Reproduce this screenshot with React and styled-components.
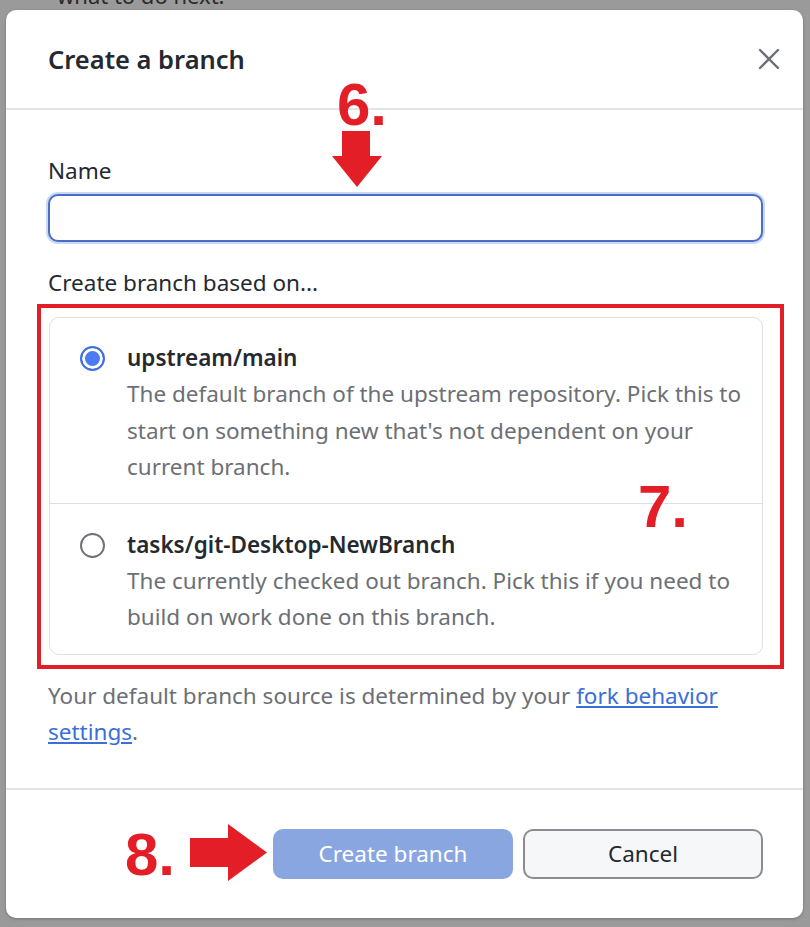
import React from 'react';
import styled, { createGlobalStyle } from 'styled-components';

const GlobalStyle = createGlobalStyle`
  html, body {
    margin: 0;
    padding: 0;
    background: #9a9a9a;
  }
  body {
    font-family: "Noto Sans", "Open Sans", "Liberation Sans", sans-serif;
  }
`;

const Screen = styled.div`
  position: relative;
  width: 810px;
  height: 927px;
  overflow: hidden;
  background: #9a9a9a;
`;

const BehindText = styled.div`
  position: absolute;
  left: 57px;
  top: -20px;
  font-size: 22px;
  color: #2a2a2a;
`;

const Dialog = styled.div`
  position: relative;
  margin: 10px 7px 0 6px;
  height: 908px;
  background: #fff;
  border-radius: 10px;
  display: flex;
  flex-direction: column;
  box-shadow: 0 1px 3px rgba(0, 0, 0, 0.25);
`;

const Header = styled.div`
  height: 98px;
  display: flex;
  align-items: center;
  justify-content: space-between;
  padding: 0 19px 0 42px;
  border-bottom: 2px solid #e3e4e6;
`;

const Title = styled.h2`
  margin: 0;
  font-size: 25.5px;
  font-weight: 600;
  color: #24292f;
`;

const CloseButton = styled.button`
  border: none;
  background: none;
  padding: 4px;
  display: flex;
  cursor: pointer;
`;

const Body = styled.div`
  padding: 46px 40px 38px 42px;
  border-bottom: 2px solid #e3e4e6;
`;

const Label = styled.div`
  font-size: 22.5px;
  line-height: 30px;
  color: #24292f;
`;

const NameInput = styled.input`
  display: block;
  box-sizing: border-box;
  width: 100%;
  height: 48px;
  margin: 8px 0 26px;
  border: 2px solid #4a6cc4;
  border-radius: 10px;
  box-shadow: 0 0 0 2px #c9d8f7;
  outline: none;
  font-size: 20px;
  padding: 0 12px;
`;

const Highlight = styled.div`
  border: 4px solid #e41e26;
  margin: 6px -21px 9px -11px;
  padding: 9px 17px 10px 8px;
`;

const Card = styled.div`
  border: 1px solid #dedfe2;
  border-radius: 10px;
`;

const Option = styled.label`
  display: flex;
  align-items: flex-start;
  gap: 22px;
  padding: ${p => p.$first ? '22px 20px 17px 30px' : '23px 20px 18px 30px'};
  border-bottom: ${p => p.$first ? '1px solid #dedfe2' : 'none'};
`;

const Radio = styled.span`
  flex: none;
  box-sizing: border-box;
  width: 25px;
  height: 25px;
  margin-top: 6px;
  border-radius: 50%;
  border: 2px solid ${p => p.$checked ? '#3f6fe0' : '#6f7277'};
  background: ${p => p.$checked ? '#4a7bf0' : '#fff'};
  box-shadow: ${p => p.$checked ? 'inset 0 0 0 3px #fff' : 'none'};
`;

const OptionText = styled.div`
  display: flex;
  flex-direction: column;
`;

const OptionTitle = styled.div`
  font-size: 22.5px;
  line-height: 36px;
  font-weight: 600;
  color: #24292f;
`;

const OptionDesc = styled.div`
  font-size: 22.5px;
  line-height: 36.5px;
  color: #6c6f75;
`;

const Note = styled.p`
  margin: 0;
  font-size: 22.5px;
  line-height: 36px;
  color: #6c6f75;
`;

const Link = styled.a`
  color: #3b6fd8;
  text-decoration: underline;
`;

const Footer = styled.div`
  flex: 1;
  display: flex;
  align-items: center;
  justify-content: flex-end;
  gap: 10px;
  padding: 0 40px;
`;

const Button = styled.button`
  box-sizing: border-box;
  width: 240px;
  height: 50px;
  border-radius: 10px;
  font-family: inherit;
  font-size: 22.5px;
  border: ${p => p.$primary ? 'none' : '2px solid #8a8c90'};
  background: ${p => p.$primary ? '#8aa6e0' : '#f6f7f9'};
  color: ${p => p.$primary ? '#fff' : '#24292f'};
`;

const Mark = styled.div`
  position: absolute;
  font-family: "Liberation Sans", Arial, sans-serif;
  font-weight: 700;
  font-size: 60px;
  line-height: 1;
  color: #e41e26;
`;

const Arrow = styled.svg`
  position: absolute;
`;

const App = () => (
  <Screen>
    <GlobalStyle />
    <BehindText>what to do next.</BehindText>
    <Dialog>
      <Header>
        <Title>Create a branch</Title>
        <CloseButton aria-label="Close">
          <svg width="22" height="22" viewBox="0 0 22 22">
            <path d="M2 2 L20 20 M20 2 L2 20" stroke="#6b6e74" strokeWidth="2.4" strokeLinecap="round" />
          </svg>
        </CloseButton>
      </Header>
      <Body>
        <Label>Name</Label>
        <NameInput type="text" />
        <Label>Create branch based on...</Label>
        <Highlight>
          <Card>
            <Option $first>
              <Radio $checked />
              <OptionText>
                <OptionTitle>upstream/main</OptionTitle>
                <OptionDesc>
                  The default branch of the upstream repository. Pick this to start on something new that's not dependent on your current branch.
                </OptionDesc>
              </OptionText>
            </Option>
            <Option>
              <Radio />
              <OptionText>
                <OptionTitle>tasks/git-Desktop-NewBranch</OptionTitle>
                <OptionDesc>
                  The currently checked out branch. Pick this if you need to build on work done on this branch.
                </OptionDesc>
              </OptionText>
            </Option>
          </Card>
        </Highlight>
        <Note>
          Your default branch source is determined by your <Link href="#">fork behavior settings</Link>.
        </Note>
      </Body>
      <Footer>
        <Button $primary>Create branch</Button>
        <Button>Cancel</Button>
      </Footer>
    </Dialog>

    <Mark style={{ left: 337, top: 75 }}>6.</Mark>
    <Arrow style={{ left: 331, top: 131 }} width="52" height="56" viewBox="0 0 52 56">
      <polygon points="11,0 39,0 39,25 51,25 26,56 1,25 11,25" fill="#e41e26" />
    </Arrow>
    <Mark style={{ left: 638, top: 477 }}>7.</Mark>
    <Mark style={{ left: 125, top: 825 }}>8.</Mark>
    <Arrow style={{ left: 190, top: 824 }} width="77" height="57" viewBox="0 0 77 57">
      <polygon points="0,14 38,14 38,0 77,28.5 38,57 38,43 0,43" fill="#e41e26" />
    </Arrow>
  </Screen>
);

export default App;
